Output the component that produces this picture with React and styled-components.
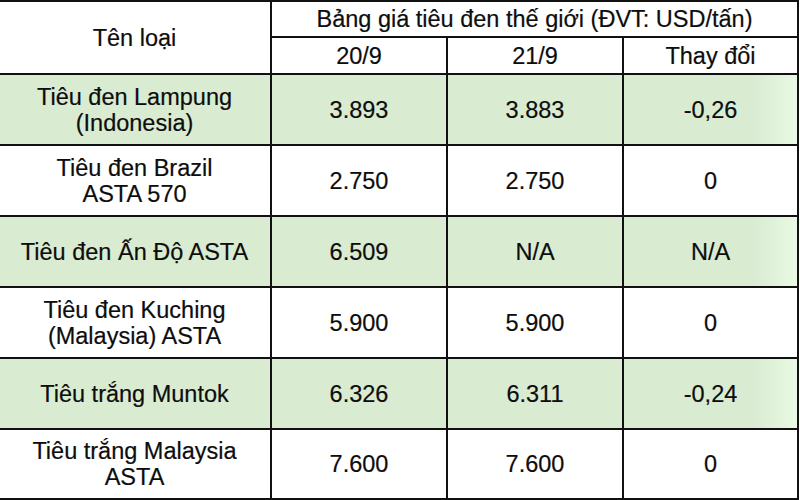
import React from 'react';
import styled, { createGlobalStyle } from 'styled-components';

const GlobalStyle = createGlobalStyle`
    html, body {
        margin: 0;
        padding: 0;
        background: #fff;
        overflow: hidden;
    }
`;

const PriceTable = styled.table`
    width: 799px;
    margin-left: -1px;
    border-collapse: collapse;
    table-layout: fixed;
    font-family: "Liberation Sans", Arial, sans-serif;
    font-size: 23.5px;
    line-height: 26px;
    color: #0d0d0d;
    -webkit-text-stroke: 0.2px #0d0d0d;

    td, th {
        border: 2px solid #111;
        text-align: center;
        vertical-align: middle;
        font-weight: normal;
        padding: 0 4px;
    }

    tr > :first-child {
        border-left: none;
    }
`;

const Col = styled.col`
    width: ${props => props.w}px;
`;

const HeadRow = styled.tr`
    height: ${props => props.h}px;
`;

const BodyRow = styled.tr`
    height: ${props => props.h || 71}px;
    background: ${props => props.green ? '#d9ecd2' : '#fff'};

    td:last-child {
        background: ${props => props.green
            ? 'linear-gradient(to right, #d9ecd2 0%, #d9ecd2 75%, #e9f9e3 100%)'
            : '#fff'};
    }
`;

const rows = [
    { name: ['Tiêu đen Lampung', '(Indonesia)'], d1: '3.893', d2: '3.883', change: '-0,26', green: true },
    { name: ['Tiêu đen Brazil', 'ASTA 570'], d1: '2.750', d2: '2.750', change: '0' },
    { name: ['Tiêu đen Ấn Độ ASTA'], d1: '6.509', d2: 'N/A', change: 'N/A', green: true },
    { name: ['Tiêu đen Kuching', '(Malaysia) ASTA'], d1: '5.900', d2: '5.900', change: '0' },
    { name: ['Tiêu trắng Muntok'], d1: '6.326', d2: '6.311', change: '-0,24', green: true },
    { name: ['Tiêu trắng Malaysia', 'ASTA'], d1: '7.600', d2: '7.600', change: '0', h: 70 },
];

export default function App() {
    return (
        <>
            <GlobalStyle />
            <PriceTable>
                <colgroup>
                    <Col w={272} />
                    <Col w={176} />
                    <Col w={176} />
                    <Col w={175} />
                </colgroup>
                <thead>
                    <HeadRow h={36}>
                        <th rowSpan={2}>Tên loại</th>
                        <th colSpan={3}>Bảng giá tiêu đen thế giới (ĐVT: USD/tấn)</th>
                    </HeadRow>
                    <HeadRow h={37}>
                        <th>20/9</th>
                        <th>21/9</th>
                        <th>Thay đổi</th>
                    </HeadRow>
                </thead>
                <tbody>
                    {rows.map((r, i) => (
                        <BodyRow key={i} green={r.green ? 1 : 0} h={r.h}>
                            <td>
                                {r.name.map((line, j) => <div key={j}>{line}</div>)}
                            </td>
                            <td>{r.d1}</td>
                            <td>{r.d2}</td>
                            <td>{r.change}</td>
                        </BodyRow>
                    ))}
                </tbody>
            </PriceTable>
        </>
    );
}
